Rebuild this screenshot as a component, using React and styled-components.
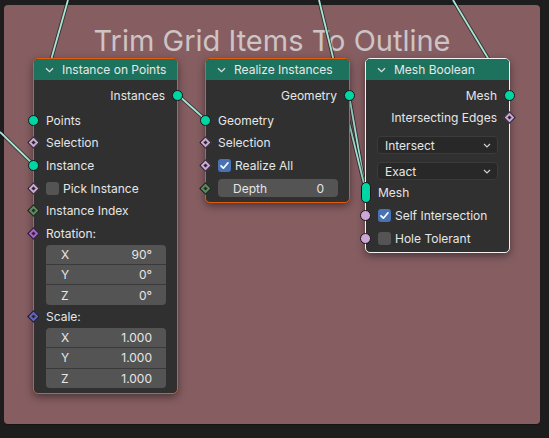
import React from "react";
import styled, { createGlobalStyle, css } from "styled-components";

const GlobalStyle = createGlobalStyle`
  html, body {
    margin: 0;
    padding: 0;
    background: #1d1d1d;
  }
  body {
    font-family: Inter, "Noto Sans", sans-serif;
    overflow: hidden;
  }
`;

const Canvas = styled.div`
  position: relative;
  width: 549px;
  height: 438px;
  padding: 5px 9px 14px 4px;
  box-sizing: border-box;
`;

const Frame = styled.div`
  height: 100%;
  background: #865e62;
  border-radius: 4px;
  box-shadow: 0 1px 0 rgba(0, 0, 0, 0.25);
`;

const FrameTitle = styled.div`
  padding-top: 21px;
  text-align: center;
  font-size: 29px;
  line-height: 1;
  color: #cdc4c5;
`;

const Links = styled.svg`
  position: absolute;
  left: 0;
  top: 0;
  z-index: 1;
`;

const Node = styled.div`
  position: absolute;
  left: ${(p) => p.$x}px;
  top: ${(p) => p.$y}px;
  width: 145px;
  z-index: 2;
  box-sizing: border-box;
  background: #303030;
  border: 1px solid ${(p) => (p.$active ? "#f2f2f2" : "#e25a0c")};
  border-radius: 5px;
  box-shadow: 0 3px 8px rgba(0, 0, 0, 0.45);
  padding-bottom: ${(p) => p.$pb}px;
`;

const Header = styled.div`
  height: 21px;
  background: #1d725e;
  border-radius: 4px 4px 0 0;
  display: flex;
  align-items: center;
  gap: 8px;
  padding-left: 11px;
  font-size: 12px;
  color: #e8e8e8;
  margin-bottom: 4px;
`;

const Row = styled.div`
  position: relative;
  height: 22.6px;
  display: flex;
  align-items: center;
  justify-content: ${(p) => (p.$out ? "flex-end" : "flex-start")};
  gap: 4px;
  padding: 0 ${(p) => p.$pr || 12}px 0 12px;
  margin-top: ${(p) => p.$mt || 0}px;
  font-size: 12px;
  color: #e6e6e6;
  white-space: nowrap;
`;

const shapes = {
  circle: css`
    width: 11px;
    height: 11px;
    margin-top: -5.5px;
    border-radius: 50%;
    ${(p) => (p.$out ? "right: -6px;" : "left: -6px;")}
  `,
  pill: css`
    width: 10px;
    height: 21px;
    margin-top: -10.5px;
    border-radius: 5px;
    left: -5.5px;
  `,
  diamond: css`
    width: 9px;
    height: 9px;
    margin-top: -4.5px;
    transform: rotate(45deg);
    ${(p) => (p.$out ? "right: -5px;" : "left: -5px;")}
    &::after {
      content: "";
      position: absolute;
      left: 2.3px;
      top: 2.3px;
      width: 2.4px;
      height: 2.4px;
      background: #2a2a2a;
    }
  `,
};

const Socket = styled.span`
  position: absolute;
  top: 50%;
  box-sizing: border-box;
  background: ${(p) => p.$color};
  border: 1px solid #161616;
  ${(p) => shapes[p.$shape || "circle"]}
`;

const Check = styled.span`
  width: 13px;
  height: 13px;
  flex-shrink: 0;
  border-radius: 3px;
  background: ${(p) => (p.$on ? "#4772b3" : "#545454")};
  display: flex;
  align-items: center;
  justify-content: center;
`;

const VectorBox = styled.div`
  margin: 0 11px 0 12px;
  border-radius: 4px;
  overflow: hidden;
  display: flex;
  flex-direction: column;
  gap: 1px;
  background: #3a3a3a;
`;

const Field = styled.div`
  flex: ${(p) => (p.$grow ? 1 : "none")};
  height: ${(p) => p.$h || 19.4}px;
  background: #545454;
  border-radius: ${(p) => (p.$round ? "4px" : "0")};
  display: flex;
  align-items: center;
  justify-content: space-between;
  padding: 0 14px 0 15px;
  font-size: 12px;
  color: #e6e6e6;
`;

const Dropdown = styled.div`
  height: 18px;
  margin: ${(p) => p.$mt}px 11px 0 11px;
  box-sizing: border-box;
  background: #282828;
  border: 1px solid #3b3b3b;
  border-radius: 4px;
  display: flex;
  align-items: center;
  justify-content: space-between;
  padding: 0 6px 0 7px;
  font-size: 12px;
  color: #e6e6e6;
`;

const GEO = "#00d6a3";
const BOOL = "#cca6d6";
const INT = "#598c5c";
const ROT = "#a663c7";
const VEC = "#6363c7";

const Chevron = () => (
  <svg width="9" height="6" viewBox="0 0 9 6">
    <path d="M1 1.2 L4.5 4.6 L8 1.2" fill="none" stroke="#dcdcdc" strokeWidth="1.3" />
  </svg>
);

const Tick = () => (
  <svg width="11" height="11" viewBox="0 0 11 11">
    <path d="M2 5.8 L4.4 8.2 L9 2.8" fill="none" stroke="#fff" strokeWidth="1.7" strokeLinecap="round" strokeLinejoin="round" />
  </svg>
);

const DropArrow = () => (
  <svg width="8" height="5" viewBox="0 0 8 5">
    <path d="M1 1 L4 4 L7 1" fill="none" stroke="#cfcfcf" strokeWidth="1.2" />
  </svg>
);

const Link = ({ x1, y1, x2, y2 }) => (
  <g>
    <line x1={x1} y1={y1} x2={x2} y2={y2} stroke="#1a1a1a" strokeOpacity="0.7" strokeWidth="3.6" />
    <line x1={x1} y1={y1} x2={x2} y2={y2} stroke="#a6e8d8" strokeWidth="1.8" />
  </g>
);

const Vector = ({ values }) => (
  <VectorBox>
    {["X", "Y", "Z"].map((axis, i) => (
      <Field key={axis}>
        <span>{axis}</span>
        <span>{values[i]}</span>
      </Field>
    ))}
  </VectorBox>
);

export default function App() {
  return (
    <Canvas>
      <GlobalStyle />
      <Frame>
        <FrameTitle>Trim Grid Items To Outline</FrameTitle>
      </Frame>

      <Links width="549" height="438">
        <Link x1={68} y1={0} x2={34} y2={120} />
        <Link x1={0} y1={132} x2={34} y2={165} />
        <Link x1={178} y1={95} x2={206} y2={120} />
        <Link x1={349} y1={95} x2={366} y2={192} />
        <Link x1={319} y1={0} x2={366} y2={192} />
        <Link x1={453} y1={0} x2={500} y2={78} />
      </Links>

      <Node $x={33} $y={58} $pb={5}>
        <Header>
          <Chevron />
          Instance on Points
        </Header>
        <Row $out>
          Instances
          <Socket $out $color={GEO} />
        </Row>
        <Row $mt={2.4}>
          <Socket $color={GEO} />
          Points
        </Row>
        <Row>
          <Socket $shape="diamond" $color={BOOL} />
          Selection
        </Row>
        <Row>
          <Socket $color={GEO} />
          Instance
        </Row>
        <Row>
          <Socket $shape="diamond" $color={BOOL} />
          <Check />
          Pick Instance
        </Row>
        <Row>
          <Socket $shape="diamond" $color={INT} />
          Instance Index
        </Row>
        <Row>
          <Socket $shape="diamond" $color={ROT} />
          Rotation:
        </Row>
        <Vector values={["90°", "0°", "0°"]} />
        <Row $mt={0.5}>
          <Socket $shape="diamond" $color={VEC} />
          Scale:
        </Row>
        <Vector values={["1.000", "1.000", "1.000"]} />
      </Node>

      <Node $x={205} $y={58} $pb={3}>
        <Header>
          <Chevron />
          Realize Instances
        </Header>
        <Row $out>
          Geometry
          <Socket $out $color={GEO} />
        </Row>
        <Row $mt={2.4}>
          <Socket $color={GEO} />
          Geometry
        </Row>
        <Row>
          <Socket $shape="diamond" $color={BOOL} />
          Selection
        </Row>
        <Row>
          <Socket $shape="diamond" $color={BOOL} />
          <Check $on>
            <Tick />
          </Check>
          Realize All
        </Row>
        <Row $pr={11}>
          <Socket $shape="diamond" $color={INT} />
          <Field $h={18} $round $grow>
            <span>Depth</span>
            <span>0</span>
          </Field>
        </Row>
      </Node>

      <Node $x={365} $y={58} $pb={3} $active>
        <Header>
          <Chevron />
          Mesh Boolean
        </Header>
        <Row $out>
          Mesh
          <Socket $out $color={GEO} />
        </Row>
        <Row $out>
          Intersecting Edges
          <Socket $out $shape="diamond" $color={BOOL} />
        </Row>
        <Dropdown $mt={7}>
          <span>Intersect</span>
          <DropArrow />
        </Dropdown>
        <Dropdown $mt={8}>
          <span>Exact</span>
          <DropArrow />
        </Dropdown>
        <Row $mt={1.5}>
          <Socket $shape="pill" $color={GEO} />
          Mesh
        </Row>
        <Row>
          <Socket $color={BOOL} />
          <Check $on>
            <Tick />
          </Check>
          Self Intersection
        </Row>
        <Row>
          <Socket $color={BOOL} />
          <Check />
          Hole Tolerant
        </Row>
      </Node>
    </Canvas>
  );
}
